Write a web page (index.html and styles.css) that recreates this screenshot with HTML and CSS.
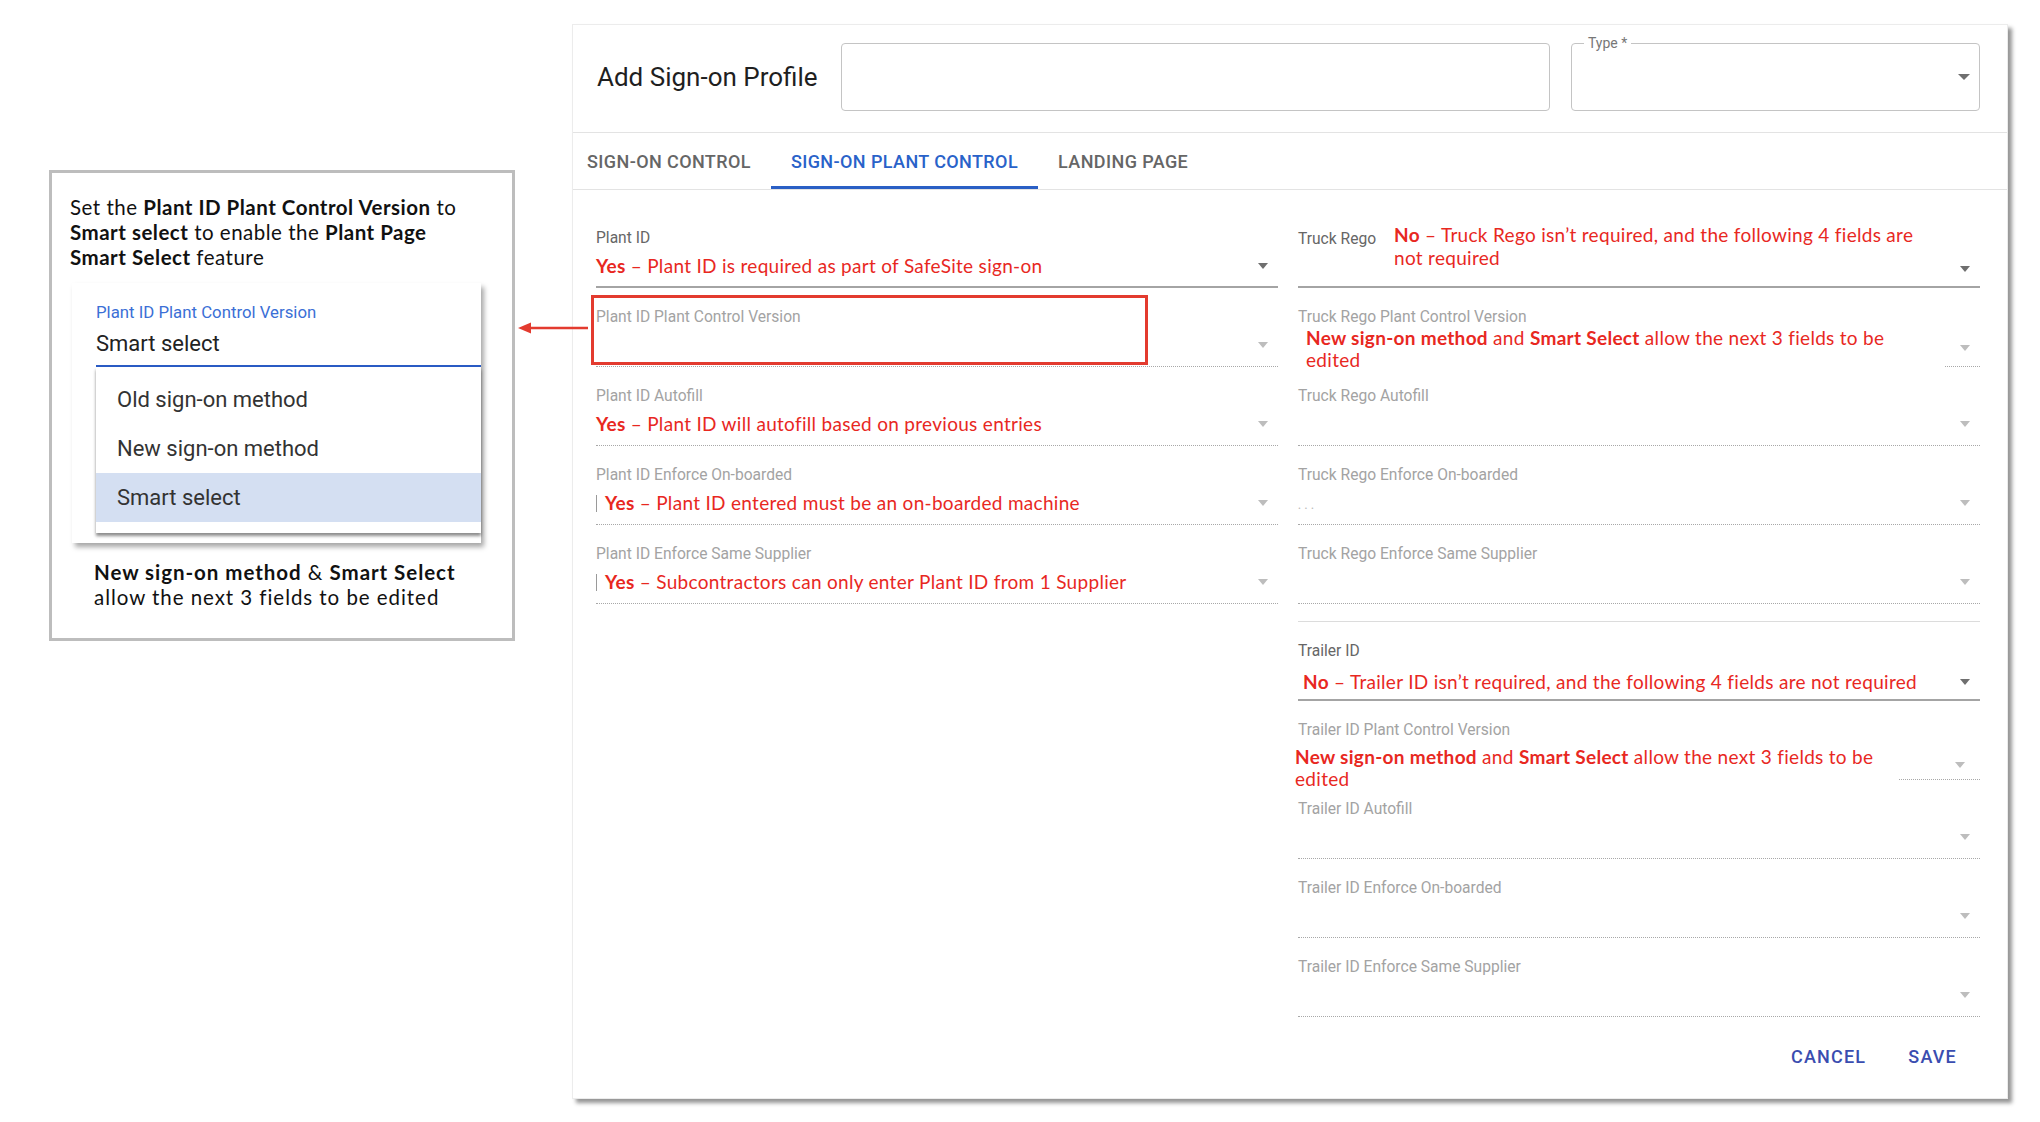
FILE: index.html
```html
<!DOCTYPE html>
<html lang="en">
<head>
<meta charset="utf-8">
<title>Add Sign-on Profile</title>
<link rel="stylesheet" href="styles.css">
</head>
<body>
<div class="page">
  <aside class="callout">
    <p class="callout-text">Set the <b>Plant ID Plant Control Version</b> to<br><b>Smart select</b> to enable the <b>Plant Page</b><br><b>Smart Select</b> feature</p>
    <div class="sample-card">
      <div class="sample-label">Plant ID Plant Control Version</div>
      <div class="sample-value">Smart select</div>
      <ul class="sample-menu">
        <li class="sample-item">Old sign-on method</li>
        <li class="sample-item">New sign-on method</li>
        <li class="sample-item selected">Smart select</li>
      </ul>
    </div>
    <p class="callout-foot"><b>New sign-on method</b> &amp; <b>Smart Select</b><br>allow the next 3 fields to be edited</p>
  </aside>

  <svg class="pointer" width="70" height="14" viewBox="0 0 70 14">
    <line x1="10" y1="7" x2="70" y2="7" stroke="#e33b2f" stroke-width="2.5"/>
    <polygon points="0,7 13,1.5 13,12.5" fill="#e33b2f"/>
  </svg>

  <section class="dialog">
    <header class="dlg-head">
      <h1 class="dlg-title">Add Sign-on Profile</h1>
      <div class="outlined name-input"></div>
      <div class="outlined type-select">
        <span class="notch-label">Type *</span>
        <span class="tri tri-dark"></span>
      </div>
    </header>

    <nav class="tabs">
      <div class="tab">SIGN-ON CONTROL</div>
      <div class="tab active">SIGN-ON PLANT CONTROL</div>
      <div class="tab">LANDING PAGE</div>
    </nav>

    <div class="content">
      <div class="col">
        <div class="field active">
          <div class="field-label">Plant ID</div>
          <div class="field-row">
            <div class="note"><b>Yes</b> – Plant ID is required as part of SafeSite sign-on</div>
            <span class="tri tri-dark"></span>
          </div>
        </div>
        <div class="field">
          <div class="highlight"></div>
          <div class="field-label">Plant ID Plant Control Version</div>
          <div class="field-row">
            <div class="note"></div>
            <span class="tri"></span>
          </div>
        </div>
        <div class="field">
          <div class="field-label">Plant ID Autofill</div>
          <div class="field-row">
            <div class="note"><b>Yes</b> – Plant ID will autofill based on previous entries</div>
            <span class="tri"></span>
          </div>
        </div>
        <div class="field">
          <div class="field-label">Plant ID Enforce On-boarded</div>
          <div class="field-row">
            <span class="cursor"></span>
            <div class="note"><b>Yes</b> – Plant ID entered must be an on-boarded machine</div>
            <span class="tri"></span>
          </div>
        </div>
        <div class="field">
          <div class="field-label">Plant ID Enforce Same Supplier</div>
          <div class="field-row">
            <span class="cursor"></span>
            <div class="note"><b>Yes</b> – Subcontractors can only enter Plant ID from 1 Supplier</div>
            <span class="tri"></span>
          </div>
        </div>
      </div>

      <div class="col">
        <div class="field active inline-field">
          <div class="field-label inline-label">Truck Rego</div>
          <div class="note inline-note"><b>No</b> – Truck Rego isn’t required, and the following 4 fields are<br>not required</div>
          <span class="tri tri-dark inline-tri"></span>
        </div>
        <div class="field covered">
          <div class="field-label">Truck Rego Plant Control Version</div>
          <div class="cover-row">
            <div class="note cover-note truck-cover"><b>New sign-on method</b> and <b>Smart Select</b> allow the next 3 fields to be<br>edited</div>
            <span class="tri cover-tri"></span>
          </div>
        </div>
        <div class="field">
          <div class="field-label">Truck Rego Autofill</div>
          <div class="field-row"><div class="note"></div><span class="tri"></span></div>
        </div>
        <div class="field">
          <div class="field-label">Truck Rego Enforce On-boarded</div>
          <div class="field-row"><div class="note"><span class="ghost">. . .</span></div><span class="tri"></span></div>
        </div>
        <div class="field">
          <div class="field-label">Truck Rego Enforce Same Supplier</div>
          <div class="field-row"><div class="note"></div><span class="tri"></span></div>
        </div>
        <div class="section-sep"></div>
        <div class="field active">
          <div class="field-label">Trailer ID</div>
          <div class="field-row trailer-row">
            <div class="note trailer-note"><b>No</b> – Trailer ID isn’t required, and the following 4 fields are not required</div>
            <span class="tri tri-dark"></span>
          </div>
        </div>
        <div class="field covered">
          <div class="field-label">Trailer ID Plant Control Version</div>
          <div class="cover-row">
            <div class="note cover-note trailer-cover"><b>New sign-on method</b> and <b>Smart Select</b> allow the next 3 fields to be<br>edited</div>
            <span class="tri cover-tri trailer-tri"></span>
          </div>
        </div>
        <div class="field">
          <div class="field-label">Trailer ID Autofill</div>
          <div class="field-row"><div class="note"></div><span class="tri"></span></div>
        </div>
        <div class="field">
          <div class="field-label">Trailer ID Enforce On-boarded</div>
          <div class="field-row"><div class="note"></div><span class="tri"></span></div>
        </div>
        <div class="field">
          <div class="field-label">Trailer ID Enforce Same Supplier</div>
          <div class="field-row"><div class="note"></div><span class="tri"></span></div>
        </div>
      </div>
    </div>

    <footer class="actions">
      <button class="btn">CANCEL</button>
      <button class="btn">SAVE</button>
    </footer>
  </section>
</div>
</body>
</html>
```
FILE: styles.css
```css
* { box-sizing: border-box; }
html, body { margin: 0; padding: 0; background: #fff; }
body {
  width: 2040px;
  height: 1122px;
  overflow: hidden;
  font-family: Roboto, "Liberation Sans", sans-serif;
}
.page {
  position: relative;
  display: flex;
  align-items: flex-start;
  padding: 24px 0 0 49px;
  height: 100%;
}

/* ---------- callout ---------- */
.callout {
  margin-top: 146px;
  width: 466px;
  height: 471px;
  flex: 0 0 auto;
  border: 3px solid #bdbdbd;
  padding: 22px 0 0 18px;
  font-family: Lato, "DejaVu Sans", sans-serif;
  color: #111;
}
.callout-text {
  margin: 0;
  font-size: 20.5px;
  line-height: 25px;
  letter-spacing: 0.5px;
  white-space: nowrap;
}
.callout-text b, .callout-foot b { font-weight: 700; }
.sample-card {
  margin: 13px 0 0 2px;
  width: 409px;
  background: #fff;
  padding: 19px 0 10px 24px;
  box-shadow: 3px 4px 5px rgba(0,0,0,0.35);
  font-family: Roboto, "Liberation Sans", sans-serif;
}
.sample-label {
  font-size: 16.8px;
  line-height: 20px;
  color: #3b6fd6;
}
.sample-value {
  margin-top: 8px;
  font-size: 22px;
  line-height: 28px;
  color: #222;
  padding-bottom: 7px;
  border-bottom: 2px solid #2a5bc4;
}
.sample-menu {
  list-style: none;
  margin: 0;
  padding: 8px 0 11px;
  background: #fff;
  box-shadow: 0 3px 3px rgba(0,0,0,0.45);
}
.sample-item {
  height: 49px;
  line-height: 49px;
  padding-left: 21px;
  font-size: 22px;
  color: #333;
}
.sample-item.selected { background: #d4dff2; }
.callout-foot {
  margin: 17px 0 0 24px;
  font-size: 20.5px;
  line-height: 25px;
  letter-spacing: 0.95px;
  white-space: nowrap;
}

/* ---------- arrow overlay ---------- */
.pointer {
  position: absolute;
  left: 518px;
  top: 321px;
}

/* ---------- dialog ---------- */
.dialog {
  margin-left: 57px;
  width: 1436px;
  height: 1075px;
  flex: 0 0 auto;
  background: #fff;
  border: 1px solid #ececec;
  box-shadow: 4px 4px 4px rgba(0,0,0,0.42);
  display: flex;
  flex-direction: column;
}
.dlg-head {
  height: 108px;
  flex: 0 0 auto;
  display: flex;
  align-items: flex-start;
  padding: 18px 27px 0 24px;
  border-bottom: 1px solid #e3e3e3;
}
.dlg-title {
  margin: 0;
  width: 244px;
  flex: 0 0 auto;
  font-size: 26px;
  line-height: 68px;
  font-weight: 400;
  color: #1f1f1f;
  white-space: nowrap;
}
.outlined {
  height: 68px;
  border: 1px solid #c4c4c4;
  border-radius: 4px;
  position: relative;
}
.name-input { width: 709px; flex: 0 0 auto; }
.type-select {
  margin-left: 21px;
  width: 409px;
  flex: 0 0 auto;
  display: flex;
  align-items: center;
  justify-content: flex-end;
  padding-right: 9px;
}
.notch-label {
  position: absolute;
  left: 12px;
  top: -9px;
  padding: 0 4px;
  background: #fff;
  font-size: 14px;
  line-height: 16px;
  color: #777;
}
.type-select .tri {
  border-left-width: 6px;
  border-right-width: 6px;
  border-top-width: 6px;
  margin: 0;
}

.tabs {
  height: 57px;
  flex: 0 0 auto;
  display: flex;
  border-bottom: 1px solid #e3e3e3;
}
.tab {
  display: flex;
  align-items: center;
  padding: 3px 20px 0;
  font-size: 18px;
  font-weight: 500;
  letter-spacing: 0.4px;
  color: #666;
  border-bottom: 3px solid transparent;
}
.tab:first-child { padding-left: 14px; }
.tab.active {
  color: #2962c9;
  border-bottom-color: #2a5fc5;
}

.content {
  display: grid;
  grid-template-columns: 682px 682px;
  column-gap: 20px;
  padding: 19px 27px 0 23px;
}
.col { display: flex; flex-direction: column; }

.field {
  position: relative;
  height: 79px;
  flex: 0 0 auto;
  padding-top: 19px;
  border-bottom: 1px dotted #a8a8a8;
}
.field.active { border-bottom: 2px solid #a4a4a4; }
.field-label {
  font-size: 15.6px;
  line-height: 20px;
  color: #a3a3a3;
  white-space: nowrap;
}
.field.active .field-label { color: #666; }
.field-row {
  display: flex;
  align-items: center;
  height: 28px;
  margin-top: 4px;
}
.trailer-row { margin-top: 7px; }
.note {
  flex: 1 1 auto;
  font-family: Lato, "DejaVu Sans", sans-serif;
  font-size: 19px;
  letter-spacing: 0.3px;
  line-height: 22px;
  color: #e8281f;
  white-space: nowrap;
}
.note b { font-weight: 700; }
.cursor {
  width: 1px;
  height: 17px;
  background: #9a9a9a;
  margin-right: 8px;
  flex: 0 0 auto;
}
.ghost { color: #bbb; font-size: 12px; }
.tri {
  width: 0;
  height: 0;
  flex: 0 0 auto;
  border-left: 5px solid transparent;
  border-right: 5px solid transparent;
  border-top: 6px solid #bdbdbd;
  margin-right: 10px;
}
.tri-dark { border-top-color: #6f6f6f; }

.highlight {
  position: absolute;
  left: -5px;
  top: 7px;
  width: 557px;
  height: 70px;
  border: 3px solid #e33b2f;
}

/* Truck Rego: label inline with annotation */
.inline-field {
  display: flex;
  align-items: flex-start;
  padding-top: 14px;
}
.inline-label {
  width: 96px;
  flex: 0 0 auto;
  margin-top: 6px;
}
.inline-note {
  line-height: 23px;
}
.inline-tri {
  align-self: flex-end;
  margin-bottom: 14px;
}

/* fields whose underline is covered by an annotation */
.cover-row {
  display: flex;
  align-items: flex-start;
}
.cover-note {
  flex: 0 0 647px;
  padding-left: 8px;
  background: #fff;
  position: relative;
  height: 44px;
}
.cover-tri { margin-top: 18px; margin-left: 15px; }
.trailer-cover {
  flex-basis: 603px;
  padding-left: 0;
  margin-left: -3px;
  margin-top: 6px;
  height: 45px;
}
.trailer-tri { margin-top: 22px; margin-left: 57px; }
.trailer-note { padding-left: 5px; }

.section-sep {
  height: 18px;
  flex: 0 0 auto;
  border-bottom: 1px solid #dcdcdc;
}

.actions {
  display: flex;
  justify-content: flex-end;
  gap: 12px;
  padding: 19px 35px 0 0;
}
.btn {
  height: 40px;
  padding: 0 15px;
  border: 0;
  background: transparent;
  font-family: Roboto, "Liberation Sans", sans-serif;
  font-size: 18px;
  font-weight: 500;
  letter-spacing: 1.2px;
  color: #3a4db0;
}
```
